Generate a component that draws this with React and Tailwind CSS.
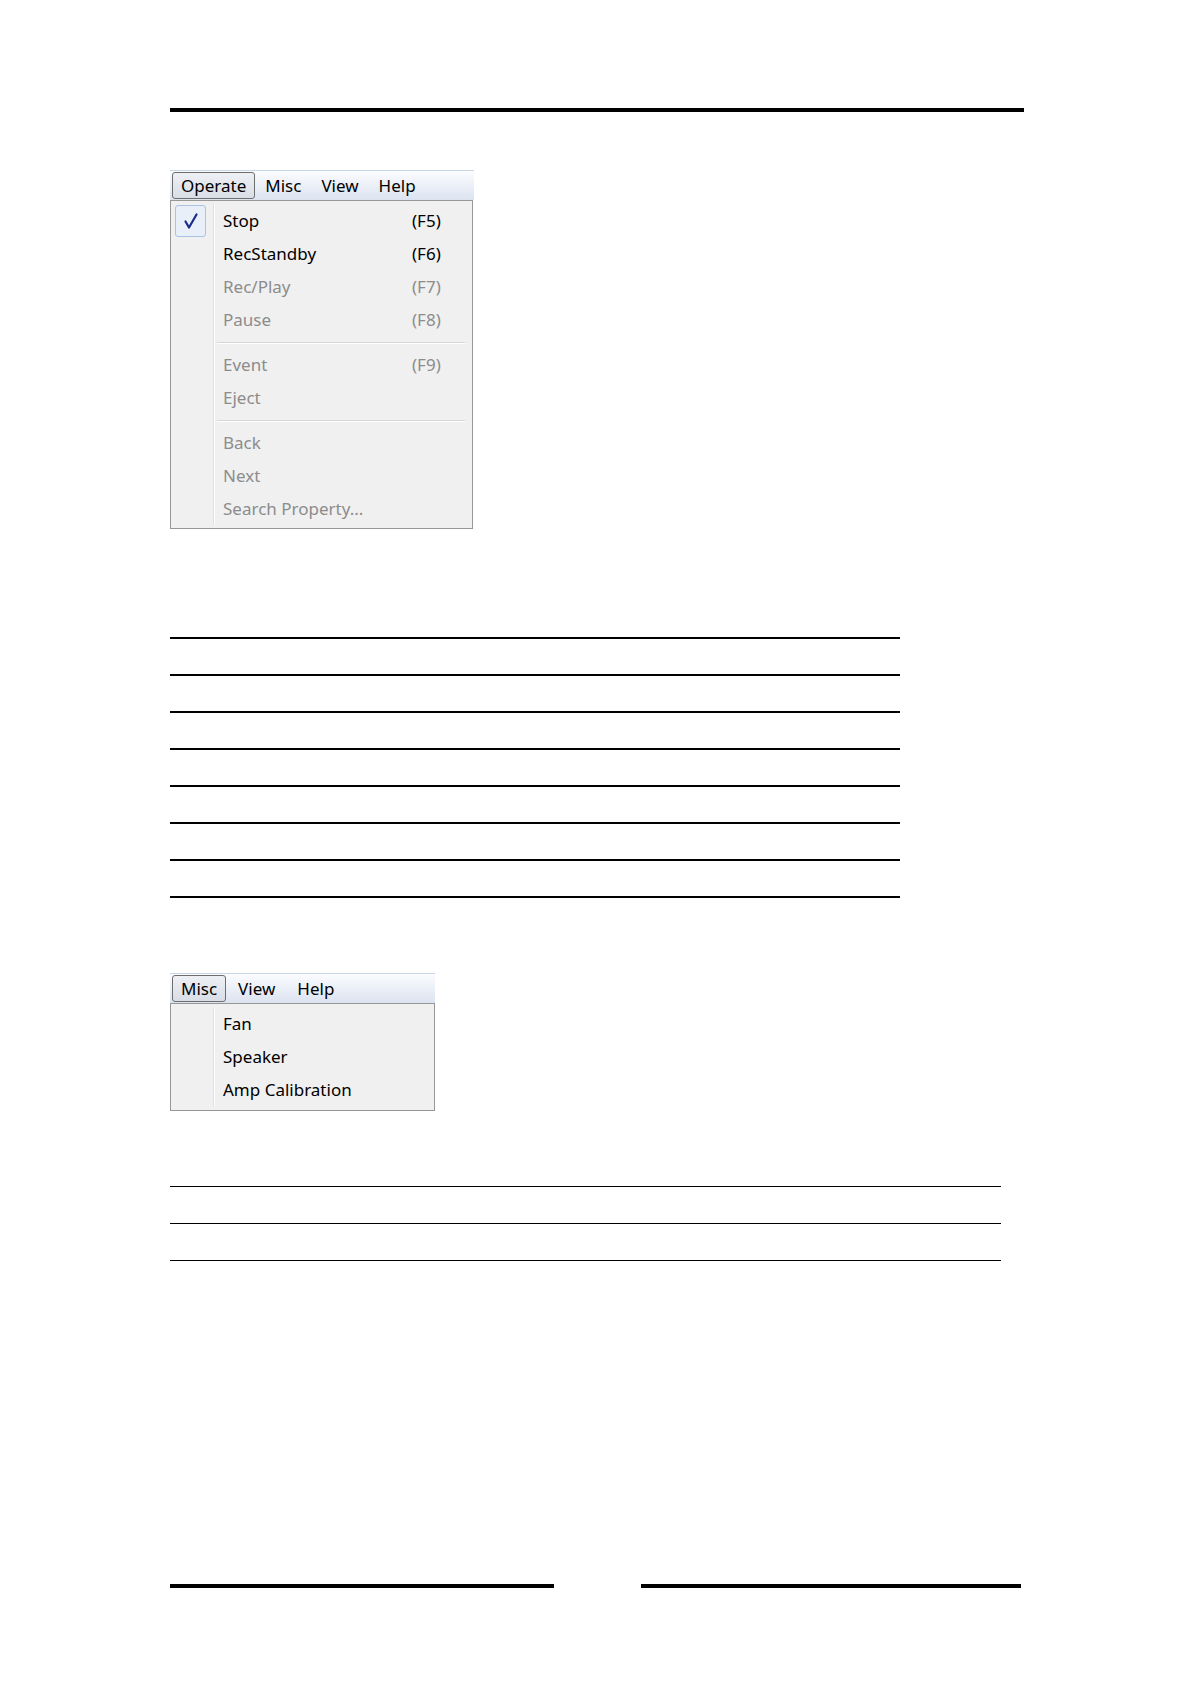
import React from "react";

const font = { fontFamily: '"Noto Sans", "Open Sans", sans-serif' };

function MenuBar({ items, width, wide }) {
  const pad = wide ? "px-[11px]" : "px-[10px]";
  return (
    <div
      className="flex h-[30px] items-center border-t border-[#c9d5e8] bg-gradient-to-b from-[#fbfcfe] to-[#dce3f0] pl-[2px]"
      style={{ width }}
    >
      {items.map((it, i) =>
        i === 0 ? (
          <div
            key={it}
            className={`${wide ? "mr-[1px]" : ""} flex h-[27px] items-center rounded-[3px] border border-[#6e6e6e] bg-gradient-to-b from-[#eef0f4] to-[#d9dde6] px-[8px] text-[17px] leading-none text-black`}
          >
            {it}
          </div>
        ) : (
          <div key={it} className={`flex h-[27px] items-center ${pad} text-[17px] leading-none text-black`}>
            {it}
          </div>
        )
      )}
    </div>
  );
}

function Check() {
  return (
    <div className="ml-[4px] flex h-[32px] w-[31px] items-center justify-center rounded-[3px] border border-[#a9c3e4] bg-[#e9eff8]">
      <svg width="16" height="18" viewBox="0 0 16 18">
        <path d="M2.5 9.5 L6 15.5 L13.5 2.5" fill="none" stroke="#1b2a8c" strokeWidth="2.2" strokeLinecap="round" strokeLinejoin="round" />
      </svg>
    </div>
  );
}

function Item({ label, key2, enabled, checked }) {
  const c = enabled ? "text-black" : "text-[#8c8c8c]";
  return (
    <div className="flex h-[33px] items-stretch">
      <div className="flex w-[43px] items-center border-r border-[#e0e0e0] shadow-[1px_0_0_#ffffff]">
        {checked ? <Check /> : null}
      </div>
      <div className={`flex flex-1 items-center pl-[9px] text-[17px] leading-none ${c}`}>
        <span className="w-[189px]">{label}</span>
        {key2 ? <span>{key2}</span> : null}
      </div>
    </div>
  );
}

function Sep() {
  return (
    <div className="flex h-[12px] items-stretch">
      <div className="w-[43px] border-r border-[#e0e0e0] shadow-[1px_0_0_#ffffff]" />
      <div className="flex-1 pl-[3px] pr-[7px] pt-[6px]">
        <div className="h-px bg-[#d7d7d7] shadow-[0_1px_0_#ffffff]" />
      </div>
    </div>
  );
}

function Dropdown({ children, width }) {
  return (
    <div className="border border-[#979797] bg-[#f0f0f0] py-[3px]" style={{ width }}>
      {children}
    </div>
  );
}

function Lines({ count, width, gap }) {
  return (
    <div className="flex flex-col">
      {Array.from({ length: count }).map((_, i) => (
        <div key={i} className="h-[1.5px] bg-black" style={{ width, marginTop: i === 0 ? 0 : gap }} />
      ))}
    </div>
  );
}

export default function App() {
  return (
    <div className="relative h-[1684px] w-[1191px] bg-white" style={font}>
      <div className="flex flex-col pl-[170px] pt-[108px]">
        <div className="h-[4px] w-[854px] bg-black" />

        <div className="mt-[58px]">
          <MenuBar items={["Operate", "Misc", "View", "Help"]} width={304} />
          <Dropdown width={303}>
            <Item label="Stop" key2="(F5)" enabled checked />
            <Item label="RecStandby" key2="(F6)" enabled />
            <Item label="Rec/Play" key2="(F7)" />
            <Item label="Pause" key2="(F8)" />
            <Sep />
            <Item label="Event" key2="(F9)" />
            <Item label="Eject" />
            <Sep />
            <Item label="Back" />
            <Item label="Next" />
            <Item label="Search Property..." />
          </Dropdown>
        </div>

        <div className="mt-[108px]">
          <Lines count={8} width={730} gap={35.5} />
        </div>

        <div className="mt-[75px]">
          <MenuBar items={["Misc", "View", "Help"]} width={265} wide />
          <Dropdown width={265}>
            <div className="pb-[1px]">
              <Item label="Fan" enabled />
              <Item label="Speaker" enabled />
              <Item label="Amp Calibration" enabled />
            </div>
          </Dropdown>
        </div>

        <div className="mt-[75px]">
          <Lines count={3} width={831} gap={35.5} />
        </div>

        <div className="mt-[323px] flex gap-[87px]">
          <div className="h-[4px] w-[384px] bg-black" />
          <div className="h-[4px] w-[380px] bg-black" />
        </div>
      </div>
    </div>
  );
}
